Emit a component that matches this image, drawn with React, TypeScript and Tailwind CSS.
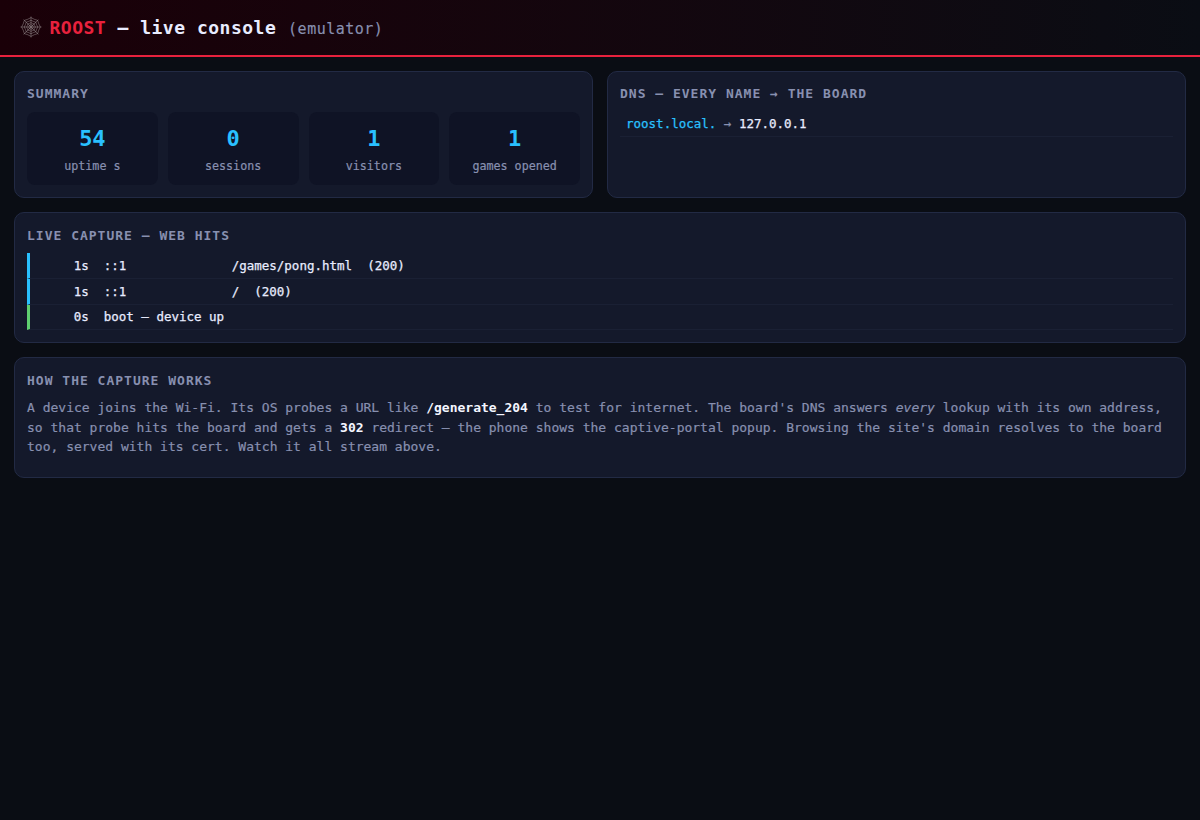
import type { ReactNode } from "react";

const stats = [
  { value: "54", label: "uptime s" },
  { value: "0", label: "sessions" },
  { value: "1", label: "visitors" },
  { value: "1", label: "games opened" },
];

const hits = [
  { text: "     1s  ::1              /games/pong.html  (200)", edge: "border-l-[#29c0ff]" },
  { text: "     1s  ::1              /  (200)", edge: "border-l-[#29c0ff]" },
  { text: "     0s  boot — device up", edge: "border-l-[#5fcf70]" },
];

// Web strand sagging between the eight spokes at radius r.
function strand(r: number) {
  let d = "";
  for (let i = 0; i <= 8; i++) {
    const a = (i * Math.PI) / 4;
    const x = (11 + r * Math.sin(a)).toFixed(2);
    const y = (11 - r * Math.cos(a)).toFixed(2);
    if (i === 0) {
      d = `M${x} ${y}`;
      continue;
    }
    const m = a - Math.PI / 8;
    const q = r * 0.86;
    d += `Q${(11 + q * Math.sin(m)).toFixed(2)} ${(11 - q * Math.cos(m)).toFixed(2)} ${x} ${y}`;
  }
  return d;
}

function Web() {
  return (
    <svg viewBox="0 0 22 22" className="-mt-px h-[22px] w-[22px] shrink-0" fill="none" stroke="#a8a0a2" strokeWidth="0.9" strokeOpacity="0.5">
      <path d="M11 .5v21M.5 11h21M3.6 3.6l14.8 14.8M18.4 3.6L3.6 18.4" />
      <path d={strand(9.4)} />
      <path d={strand(6.8)} />
      <path d={strand(4.4)} />
      <path d={strand(2.4)} />
    </svg>
  );
}

function Card({
  title,
  className = "",
  titleGap = "mb-2",
  children,
}: {
  title: string;
  className?: string;
  titleGap?: string;
  children: ReactNode;
}) {
  return (
    <section className={`rounded-[10px] border border-[#222a44] bg-[#14192b] p-3 ${className}`}>
      <h2 className={`text-[13px] leading-[19.5px] font-bold tracking-[1px] text-[#8890b0] uppercase ${titleGap}`}>{title}</h2>
      {children}
    </section>
  );
}

export default function App() {
  return (
    <div className="min-h-screen bg-[#0a0d14] font-['DejaVu_Sans_Mono',monospace] text-[#e8ecff]">
      <header className="flex h-[57px] items-center border-b-2 border-[#e8213d] bg-linear-to-r from-[#1a0008] to-[#0a0d14] pl-[19.5px]">
        <Web />
        <h1 className="ml-2 pt-[2px] text-[18px] leading-[27px] font-bold tracking-[0.5px] whitespace-pre">
          <span className="text-[#e8213d]">ROOST</span> — live console{" "}
          <span className="ml-[0.5px] text-[15px] font-normal text-[#8890b0] [-webkit-text-stroke:0.15px]">(emulator)</span>
        </h1>
      </header>
      <main className="grid grid-cols-2 gap-3.5 p-3.5">
        <Card title="Summary">
          <div className="grid grid-cols-4 gap-2.5">
            {stats.map((s) => (
              <div key={s.label} className="rounded-lg bg-[#0f1325] px-2.5 pt-[10.5px] pb-[10.25px] text-center">
                <div className="text-[22px] leading-[33px] font-bold text-[#29c0ff]">{s.value}</div>
                <div className="mt-[2px] text-[11.7px] leading-[18px] text-[#8890b0] [-webkit-text-stroke:0.2px]">{s.label}</div>
              </div>
            ))}
          </div>
        </Card>
        <Card title="DNS — every name → the board">
          <div className="border-b border-[#1a2034] px-1.5 py-[3px] text-[12.5px] leading-[18.75px] whitespace-pre text-[#8890b0] [-webkit-text-stroke:0.25px]">
            <span className="text-[#29c0ff]">roost.local.</span> → <span className="text-[#e8ecff]">127.0.0.1</span>
          </div>
        </Card>
        <Card title="Live capture — web hits" className="col-span-2" titleGap="pt-[0.5px] mb-2">
          {hits.map((h) => (
            <div
              key={h.text}
              className={`border-b border-l-3 border-b-[#1a2034] px-1.5 pt-[3.6px] pb-[2.4px] text-[12.5px] leading-[18.75px] whitespace-pre [-webkit-text-stroke:0.25px] ${h.edge}`}
            >
              {h.text}
            </div>
          ))}
        </Card>
        <Card title="How the capture works" className="col-span-2" titleGap="pt-[0.5px] mb-[7.75px]">
          <p className="mb-2 text-[13px] leading-[19.5px] text-[#8890b0] [-webkit-text-stroke:0.2px]">
            A device joins the Wi-Fi. Its OS probes a URL like{" "}
            <b className="text-[#f4f6ff] [-webkit-text-stroke:0px]">/generate_204</b> to test for internet. The board's DNS
            answers <i>every</i> lookup with its own address, so that probe hits the board and gets a{" "}
            <b className="text-[#f4f6ff] [-webkit-text-stroke:0px]">302</b> redirect — the phone shows the captive-portal
            popup. Browsing the site's domain resolves to the board too, served with its cert. Watch it all stream above.
          </p>
        </Card>
      </main>
    </div>
  );
}
